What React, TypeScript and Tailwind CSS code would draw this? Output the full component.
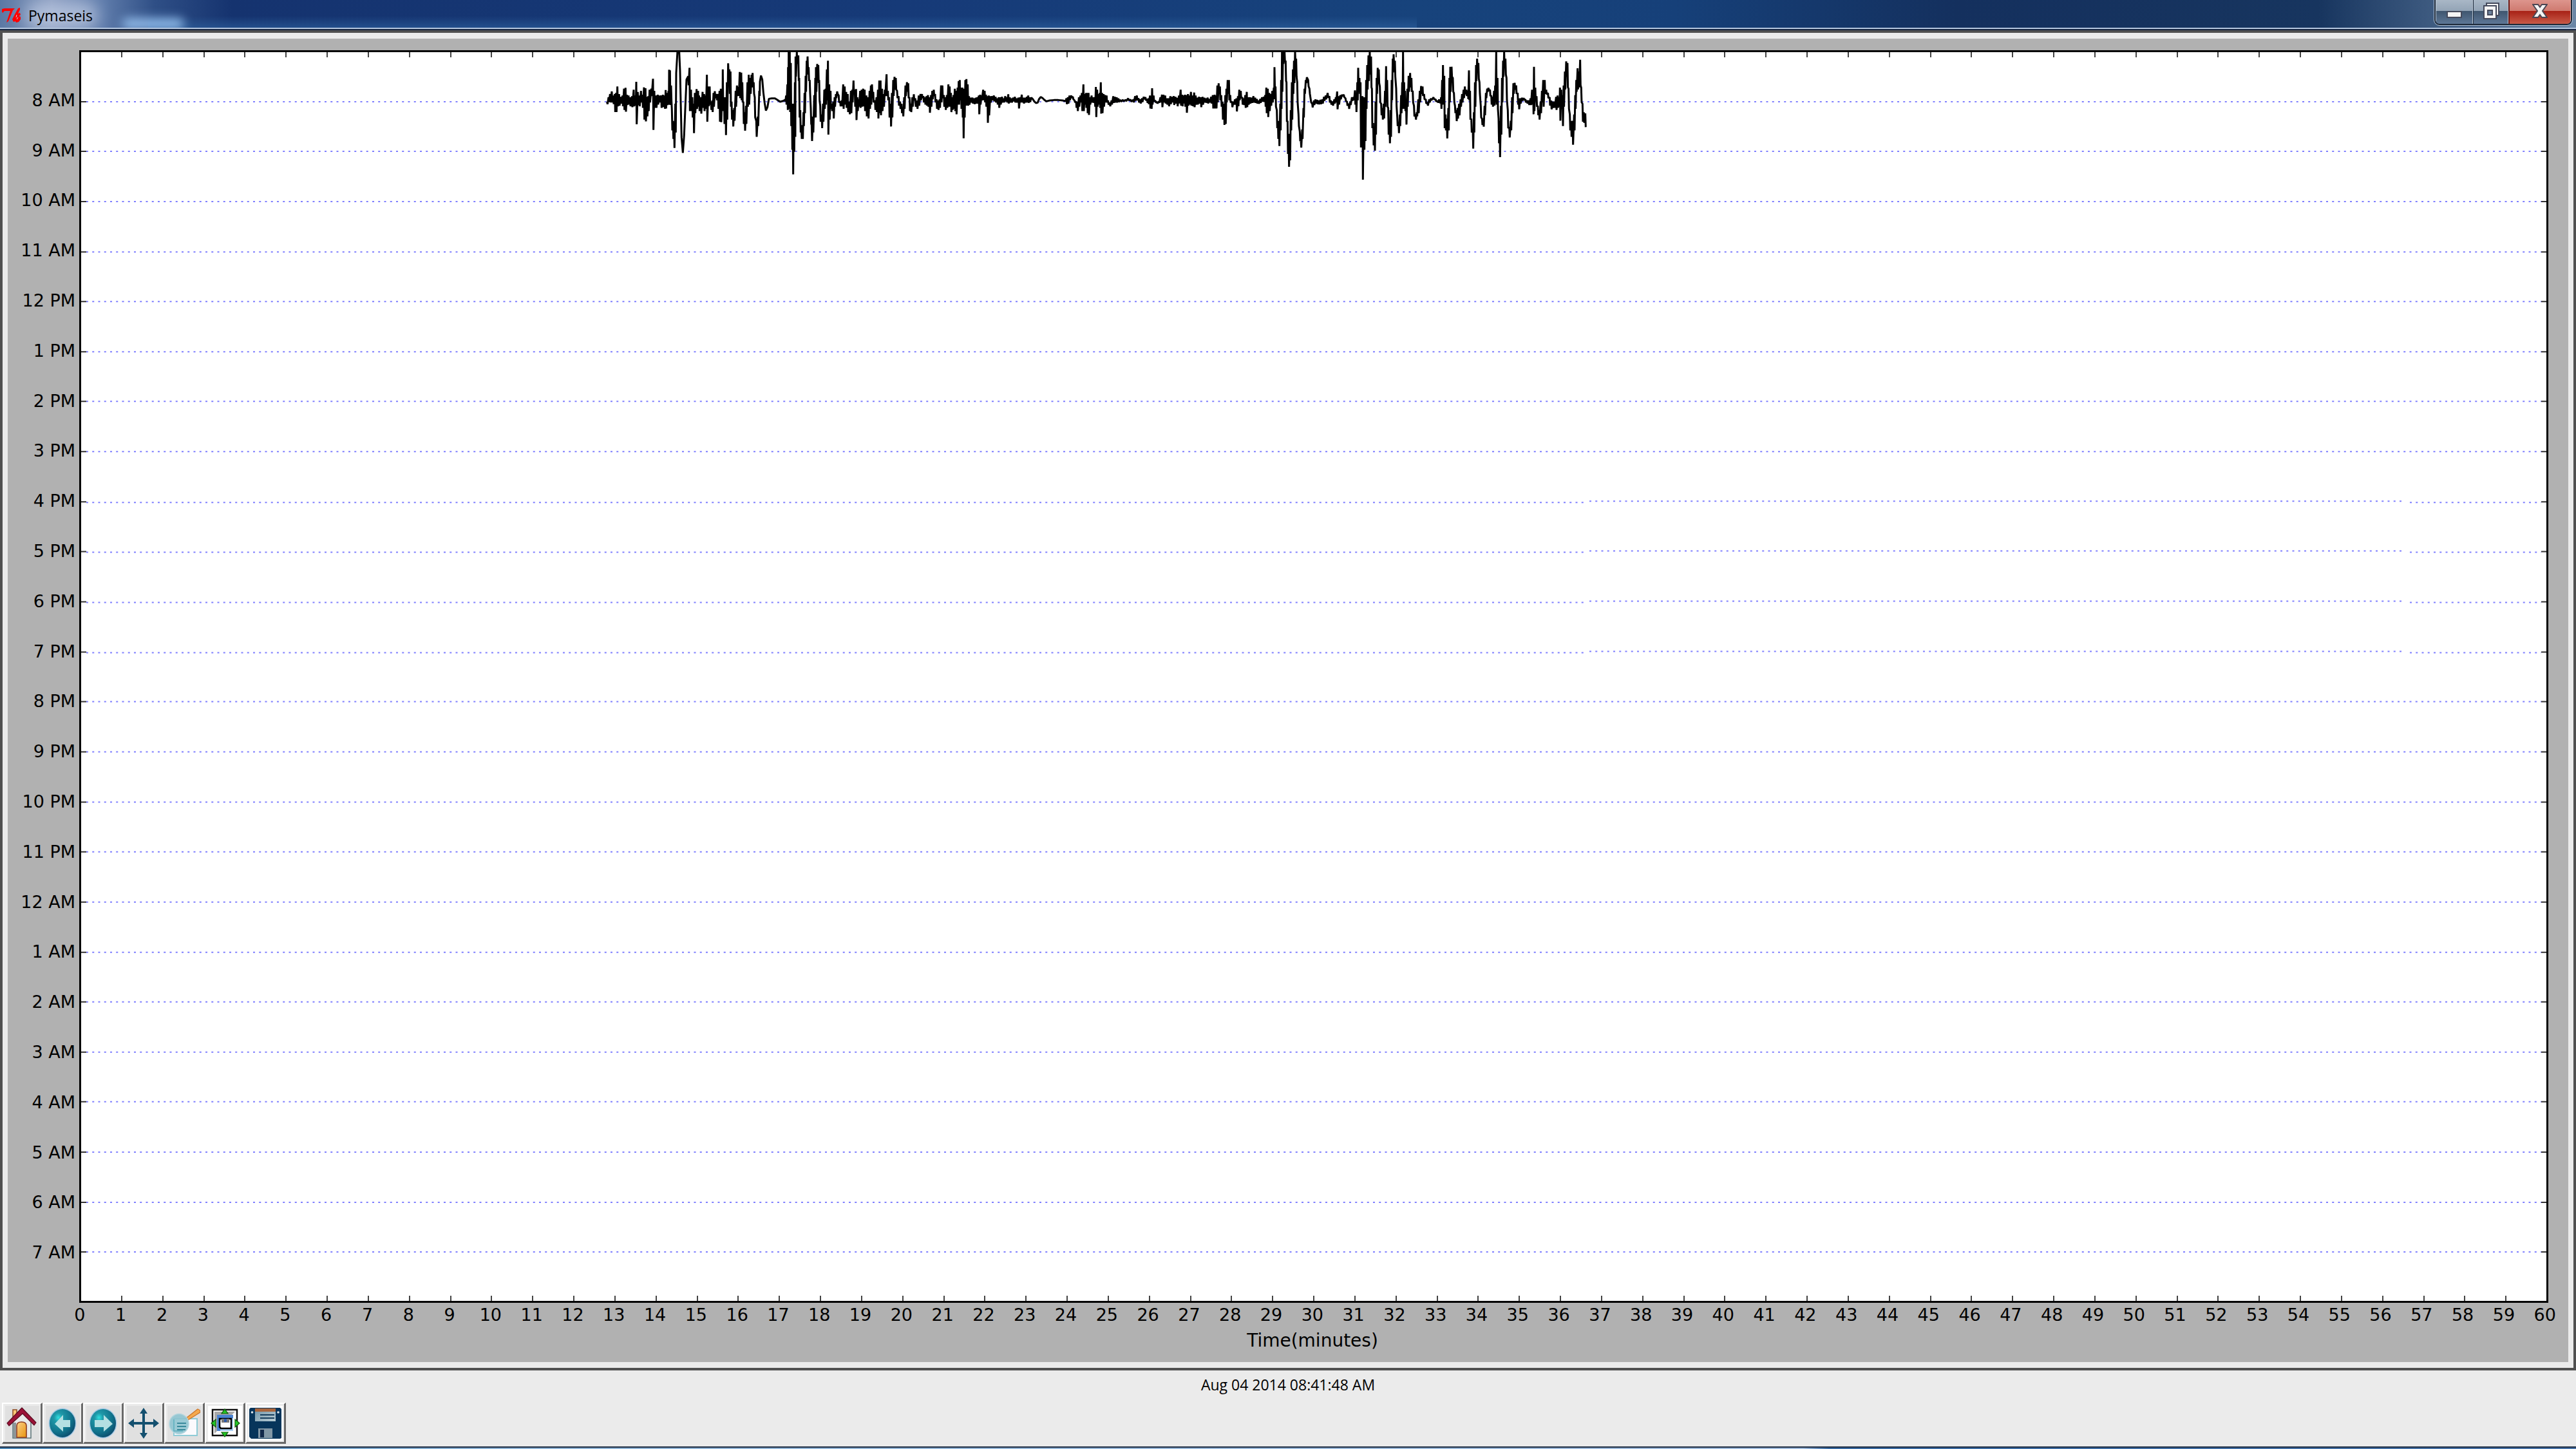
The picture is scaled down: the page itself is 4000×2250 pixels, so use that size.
import React from "react";

const HOURS = [
  "8 AM", "9 AM", "10 AM", "11 AM", "12 PM", "1 PM", "2 PM", "3 PM",
  "4 PM", "5 PM", "6 PM", "7 PM", "8 PM", "9 PM", "10 PM", "11 PM",
  "12 AM", "1 AM", "2 AM", "3 AM", "4 AM", "5 AM", "6 AM", "7 AM",
];
const MINUTES = Array.from({ length: 61 }, (_, i) => i);

const PLOT_W = 3828;
const PLOT_H = 1938;
const minuteX = (m: number) => Math.round((m * 3830) / 60) - 1;
const hourY = (h: number) => Math.round((h * 1941) / 25) - 1;

/*
 * Recorded samples, in thirds of a plot unit. Each sample is "x,y" or, where
 * the signal is denser than the trace is wide, "x,high,low".
 */
const SEGMENTS: { start: number; samples: string }[] = [
  {
    start: 2382,
    samples:
      "68,290,308 75,270,298 82,255,300 90,243,300 97,262,308 104,255,345 110,250,345 116,220,318 124,255,315 132,268,305 140,262,318 147,230,335 154,226,343 160,258,312 168,262,310 175,270,318 184,265,322 192,235,318 200,262,315 204,198,402 211,245,312 218,262,318 226,240,300 233,258,325 240,224,380 247,228,388 254,268,365 260,265,340 266,235,300 274,230,270 282,184,428 288,240,325 296,262,325 304,258,310 312,262,300 320,262,325 328,258,322 336,262,330 341,236,328 348,250,312 354,240,310 357,142,300 361,145,312 366,215,290 370,330,430 375,380,470 380,390,512 386,300,440 390,160 396,58 404,58 408,150 411,290 415,460 421,532 427,450 432,330 438,190 446,172,220 452,133,340 459,235,340 465,270,370 471,300,443 477,250,350 485,232,330 492,240,320 497,262,340 505,270,352 513,245,325 520,255,340 527,262,330 533,165,390 540,220,318 546,220,310 552,290,335 558,285,345 564,250,320 570,242,280 578,255,290 585,255,330 592,240,390 598,230,392 604,255,340 607,140,320 613,270,400 620,270,452 626,200,380 632,112,170 638,140,260 643,150,320 648,290,380 654,330,412 660,320,385 667,240,320 673,215,270 680,222,270 686,152,280 693,155,290 698,200,300 703,290,400 709,340,432 715,310,400 722,200,320 728,165,310 735,180,260 741,165,230 746,157,230 751,200,260 756,270,370 763,380,460 770,360,410 777,240,270 780,200 785,172 791,190 796,250 802,300 808,335 815,320 822,280 835,278 850,278 862,286 874,294 888,290 897,285",
  },
  {
    start: 3222,
    samples:
      "57,285,295 62,262,310 68,210,335 71,130,320 74,58,330 79,58,345 84,110,410 89,300,520 93,380,635 98,300,530 103,200,460 106,80,180 112,58,120 119,75,200 123,180,370 128,330,440 133,400,470 138,400,470 143,340,410 148,250,350 153,170,250 158,100,170 162,80,150 167,130,200 172,190,260 177,320,400 181,400,480 187,360,440 193,260,370 198,180,370 201,130,250 207,115,190 212,120,210 216,190,290 221,310,390 228,350,420 234,300,390 240,235,330 246,230,310 252,140,290 257,100,450 263,210,380 269,240,330 275,300,340 282,290,375 288,270,320 294,255,280 300,243,260 307,262,300 314,290,318 321,285,318 328,210,330 335,220,310 342,245,325 349,255,345 357,290,355 364,240,350 370,235,300 376,192,260 382,235,320 388,232,382 394,270,340 400,280,320 407,240,325 414,235,320 421,230,318 428,235,340 436,262,365 444,270,375 451,240,330 457,215,310 462,210,260 468,245,300 476,285,335 483,270,345 490,235,375 496,192,350 502,192,360 509,230,340 516,255,320 522,235,270 530,163,270 536,240,290 542,270,370 549,300,412 555,250,370 561,190,270 567,175,240 573,180,240 579,240,280 586,265,315 593,290,330 600,300,350 606,320,365 612,270,330 618,215,270 625,200,250 631,205,280 637,270,340 643,300,345 650,270,320 657,256,290 664,275,320 672,285,330 680,262,315 688,255,290 695,255,280 702,265,300 709,270,310 716,265,315 723,260,320 730,270,348 737,260,320 743,240,285 750,235,270 756,255,300 763,280,330 770,285,335 777,280,325 784,215,300 790,215,280 797,260,320 804,270,335 811,260,325 818,210,320 824,220,320 830,250,345 836,270,335 842,260,330 848,230,340 854,240,355 861,225,310 866,195,310 871,190,290 877,225,330 883,225,370 887,240,467 892,230,370 897,190,310 902,185,315 908,210,315 914,265,310 922,272,300 930,272,305 938,275,308 946,272,305 953,270,305 960,262,355 966,258,310 972,262,290 980,235,290 987,240,300 993,258,320 1000,265,395 1006,262,360 1013,265,300 1022,265,290 1030,262,295 1038,268,300 1046,275,310 1053,270,325 1060,270,310 1068,268,300 1076,275,300 1083,265,295 1090,270,300 1097,256,305 1104,270,300 1112,275,300 1120,272,295 1128,268,300 1136,275,300 1145,272,328 1152,270,300 1160,258,300 1168,272,305 1176,272,300 1184,268,300 1190,262,302 1197,270,298",
  },
  {
    start: 4422,
    samples:
      "4,275 10,280 18,292 26,300 34,298 40,282 48,272 56,276 64,284 74,292 90,288 110,286 130,286 150,288 163,288,292 168,275,308 175,270,305 182,262,290 190,262,278 198,268,285 206,285,300 213,290,325 219,290,340 226,270,320 233,262,300 240,250,340 247,210,340 253,255,310 259,250,325 265,250,350 271,250,358 277,270,310 285,262,300 293,270,302 300,270,320 305,222,368 311,235,320 317,255,310 323,250,325 328,200,352 334,250,350 341,255,320 348,260,300 355,262,300 362,285,310 370,295,318 378,285,310 386,265,302 394,268,300 402,270,300 410,275,298 420,282,296 432,282,295 444,282,294 456,275,290 468,282,296 480,282,300 488,265,292 496,262,290 504,275,300 512,280,305 520,275,298 528,268,285 536,270,290 544,280,302 550,275,308 557,262,328 563,270,330 567,228,310 574,262,295 582,285,300 590,292,305 598,290,302 606,270,300 613,258,322 620,258,300 628,262,305 636,275,310 644,275,318 652,265,308 660,268,300 668,265,312 676,268,305 684,272,318 692,262,305 700,235,315 707,258,318 714,262,305 720,258,320 727,260,348 734,255,315 741,262,310 748,245,315 756,262,318 763,248,322 770,262,310 778,272,310 786,268,305 794,270,322 802,268,310 810,272,300 818,275,302 826,272,305 834,278,300 842,268,305 850,260,328 858,258,328 865,262,328 871,215,300 877,205,260 883,220,290 889,260,320 895,290,380 902,300,405 908,260,400 913,230,300 919,190,260 925,190,290 931,260,300 939,290,322 946,290,310 953,280,310 960,275,342 967,265,318 973,235,290 980,240,280 987,270,310 994,275,312 1001,260,325 1008,245,322 1015,270,310 1023,270,305 1031,272,302 1039,265,300 1047,272,302 1055,278,305 1063,285,306 1071,278,302 1079,270,296 1087,268,298 1094,260,320 1099,225,350 1106,230,368 1113,250,340 1120,255,315 1127,240,300 1134,225,285 1137,130,240 1142,220,320",
  },
  {
    start: 5502,
    samples:
      "68,330,420 73,380,470 78,380,503 84,300,430 88,190,330 92,58,250 97,58,120 104,58,110 109,100,200 113,200,390 118,380,540 123,470,600 128,440,570 133,330,430 138,200,380 143,140,260 148,100,210 153,58,120 158,90,180 163,200,300 169,350,410 175,430,480 180,470,510 186,420,470 192,320,370 197,230,260 203,190,210 208,180 214,190,225 220,230,260 226,280,300 233,300,323 241,285,312 248,280,305 256,282,308 264,285,308 272,282,308 280,280,305 288,268,292 296,262,285 305,250,278 313,265,300 320,285,310 328,290,315 336,280,305 343,270,300 349,243,332 356,265,310 364,260,285 372,258,270 380,258,275 388,275,295 395,290,315 403,300,330 410,290,312 418,270,292 426,270,290 432,238,310 437,250,345 443,200,290 447,133,240 453,180,260 458,200,510 463,265,500 467,265,660 474,270,520 479,290,480 484,190,330 489,120,240 495,75,200 501,58,170 507,80,230 511,230,420 517,390,500 523,420,525 528,290,450 533,180,260 538,133,200 543,140,210 548,220,300 554,300,360 560,320,380 566,300,375 572,240,320 577,125,300 582,190,320 587,320,450 593,400,490 598,330,460 603,190,290 608,90,160 612,70,120 618,100,180 624,230,320 629,360,410 635,390,443 641,350,410 647,260,350 652,200,320 656,58,330 661,200,330 665,240,340 670,290,403 676,230,320 682,170,250 689,157,230 695,180,250 701,240,300 707,310,365 714,350,380 720,340,365 727,280,350 734,240,300 740,218,260 747,220,270 754,255,285 762,280,305 770,295,315 778,280,300 786,275,290 798,270,285 808,280,295 818,288,302 824,280,300",
  },
  {
    start: 6222,
    samples:
      "108,280,305 113,270,330 118,190,310 122,120,250 128,170,420 134,350,430 140,370,468 147,320,430 152,180,300 156,128,250 162,128,180 168,180,250 173,250,300 178,310,350 184,330,387 190,320,375 197,300,360 204,280,320 211,255,300 218,235,280 224,220,262 231,235,270 238,240,285 243,145,290 248,240,380 254,370,440 261,420,515 266,340,440 271,200,320 276,120,200 281,90,140 287,110,190 292,200,260 298,310,370 304,370,405 310,370,413 316,310,360 322,250,280 328,230,250 334,226,245 341,235,270 347,262,310 353,268,320 360,240,315 365,215,300 370,58,310 376,180,330 381,370,490 386,380,555 392,310,450 397,180,300 402,100,180 407,58,140 413,90,170 418,180,290 424,330,420 431,410,463 438,380,430 444,270,350 450,205,260 456,203,240 463,215,260 470,250,310 475,275,332 482,275,305 490,272,292 498,273,288 506,280,300 514,285,305 522,285,312 530,275,312 537,235,310 542,240,355 546,128,340 552,225,290 558,265,320 564,310,360 570,330,380 577,290,350 583,240,300 589,190,320 596,190,260 603,235,262 611,250,280 619,270,315 626,285,332 633,290,325 641,290,325 649,268,335 656,262,325 663,270,320 667,225,385 673,235,330 679,260,410 684,215,320 690,150,240 696,103,180 702,110,230 707,230,330 713,350,430 719,380,460 726,380,497 733,350,430 738,260,330 743,190,250 749,135,240 755,150,230 761,95,220 766,225,300 772,300,390 778,340,395 785,345,415",
  },
];

const tracePoints = SEGMENTS.flatMap(({ start, samples }) =>
  samples.split(" ").map((s) => {
    const [x, high, low] = s.split(",").map(Number);
    const px = start + x;
    const at = (y: number, dx = 0) => `${px + dx},${y - 63}`;
    return low === undefined ? at(high) : `${at(high + 3)} ${at(low - 3, 2)}`;
  }),
).join(" ");

function Seismogram() {
  return (
    <svg
      className="absolute inset-0 block h-full w-full"
      viewBox={`0 0 ${PLOT_W} ${PLOT_H}`}
      preserveAspectRatio="none"
      role="img"
      aria-label="Seismogram"
    >
      {HOURS.map((h, i) => {
        const y = hourY(i + 1);
        const shifted = i >= 8 && i <= 11;
        return (
          <g key={h}>
            {shifted ? (
              <path
                d={`M8 ${y + 1}H2334M2342 ${y - 1}H3608M3616 ${y + 1}H3820`}
                stroke="#8080ff"
                strokeWidth="2"
                strokeDasharray="3 6.25"
              />
            ) : (
              <path d={`M8 ${y}H3820`} stroke="#8080ff" strokeWidth="2" strokeDasharray="3 6.25" />
            )}
            <path d={`M0 ${y}H8M${PLOT_W - 8} ${y}H${PLOT_W}`} stroke="#333" strokeWidth="2" />
          </g>
        );
      })}
      {MINUTES.slice(1, 60).map((m) => (
        <path
          key={m}
          d={`M${minuteX(m)} 0V8M${minuteX(m)} ${PLOT_H - 8}V${PLOT_H}`}
          stroke="#444"
          strokeWidth="2"
        />
      ))}
      <g transform="scale(0.33333)">
        <polyline points={tracePoints} fill="none" stroke="#000" strokeWidth="9" strokeLinejoin="bevel" />
      </g>
    </svg>
  );
}

function TkIcon() {
  return (
    <svg viewBox="0 0 30 24" className="h-6 w-[30px]" aria-hidden="true">
      <path d="M1 6V2l4-1h16l-3 3-7 17-3 2 6-18H5L2 8z" fill="#f00" />
      <path d="M29 0l-3 1-6 11-3 6 2 4 3-1 1 2 4-1 3-4v-4l-3-1 3-2-1-3-3 1 3-6z" fill="#f00" />
      <path d="M24 11l-1 4M26 15l-2 3" stroke="#c9d2e6" strokeWidth="1" />
    </svg>
  );
}

function HomeIcon() {
  return (
    <svg viewBox="0 0 50 50" className="h-[50px] w-[50px]" aria-hidden="true">
      <defs>
        <linearGradient id="door" x1="0" y1="0" x2="1" y2="1">
          <stop offset="0" stopColor="#fbd08a" />
          <stop offset="1" stopColor="#e8940c" />
        </linearGradient>
      </defs>
      <path d="M11 4h6v14h-6z" fill="#fbc877" stroke="#8c4b25" strokeWidth="1.5" />
      <path d="M11 24 25 10l14 14v24H11z" fill="#e9eaea" />
      <path d="M11 22v26h28V22" fill="none" stroke="#5c7478" strokeWidth="1.5" />
      <path d="M12 24v23h4V24z" fill="#8d9698" />
      <path d="M17 47V29q0-6 7.500-6t7.500 6v18z" fill="url(#door)" stroke="#8c3b22" strokeWidth="1.600" />
      <path d="M25 1 2 25l3 4 21-19 18 18 3-4z" fill="#9c1237" stroke="#5c0c22" strokeWidth="1.200" strokeLinejoin="round" />
    </svg>
  );
}

function ArrowIcon({ right = false }: { right?: boolean }) {
  const id = right ? "orb-next" : "orb-prev";
  return (
    <svg viewBox="0 0 50 50" className="h-[50px] w-[50px]" aria-hidden="true">
      <defs>
        <radialGradient id={id} cx="0.34" cy="0.3" r="0.75">
          <stop offset="0" stopColor="#2fe0e0" />
          <stop offset="0.220" stopColor="#1f98a8" />
          <stop offset="0.700" stopColor="#11718a" />
          <stop offset="1" stopColor="#0c4d6e" />
        </radialGradient>
      </defs>
      <ellipse cx="25" cy="25" rx="21.500" ry="23.500" fill="#a9cbe6" />
      <ellipse cx="25" cy="25" rx="20" ry="22" fill={`url(#${id})`} />
      {right ? (
        <path d="M12 20h14v-8l14 14-14 12v-7H12z" fill="#b4dfe2" />
      ) : (
        <path d="M37 20H26v-8L13 26l13 12v-7h11z" fill="#b4dfe2" />
      )}
    </svg>
  );
}

function PanIcon() {
  return (
    <svg viewBox="0 0 50 50" className="h-[50px] w-[50px]" aria-hidden="true">
      <path
        d="M25 1l6 9h-4v13h13v-5l9 7-9 7v-5H27v13h4l-6 9-6-9h4V27H10v5l-9-7 9-7v5h13V10h-4z"
        fill="#14506f"
      />
    </svg>
  );
}

function ZoomIcon() {
  return (
    <svg viewBox="0 0 50 50" className="h-[50px] w-[50px]" aria-hidden="true">
      <path d="M9 18h36v26H9z" fill="#fbfafd" stroke="#8fcbd6" strokeWidth="2" />
      <path d="M28 17 46 3q4 1 4 5L31 20z" fill="#f5a94c" stroke="#c9752a" strokeWidth="1.200" />
      <ellipse cx="17" cy="26" rx="15" ry="15.500" fill="#8cc3cf" fillOpacity="0.880" stroke="#b2d5de" strokeWidth="1.500" />
      <path d="M9 19v18h14" fill="none" stroke="#5fb0bf" strokeWidth="1.500" />
      <path d="M14 25h14M14 30h14M14 35h13" stroke="#3a8a9c" strokeWidth="2" />
    </svg>
  );
}

function SubplotsIcon() {
  return (
    <svg viewBox="0 0 50 50" className="h-[50px] w-[50px]" aria-hidden="true">
      <path d="M6 4h38v40H6z" fill="#fff" stroke="#111" strokeWidth="2.500" />
      <path d="M9 7h32l-5 5H14v24l-5 5z" fill="#a8a8a8" />
      <path d="M13 12h25v25H13z" fill="#a9cff5" />
      <path d="M13 12h25v5H18v20h-5z" fill="#4a83d2" />
      <path d="M17 18h18v15H19l-2-2z" fill="#fff" stroke="#000" strokeWidth="2.500" />
      <path d="M20 18h12v6H20z" fill="#777" />
      <path d="M24 18h4v5h-4z" fill="#2d5bab" />
      <path d="M25 3l5 7H20zM25 46l5-7H20zM4 25l7-6v12zM48 25l-7-6v12z" fill="#25c425" stroke="#0c5c0c" strokeWidth="1.200" />
    </svg>
  );
}

function SaveIcon() {
  return (
    <svg viewBox="0 0 50 50" className="h-[50px] w-[50px]" aria-hidden="true">
      <defs>
        <linearGradient id="label" x1="0" y1="0" x2="1" y2="1">
          <stop offset="0" stopColor="#6f93a6" />
          <stop offset="1" stopColor="#b9cdd5" />
        </linearGradient>
      </defs>
      <path d="M2 1h46l2 2v45l-2 1H3l-3-3V3z" fill="#07355b" />
      <path d="M9 2h32v20H9z" fill="url(#label)" />
      <path d="M9 2h32v5H9z" fill="#a8653c" />
      <path d="M17 12h22M17 17h22" stroke="#173f5e" strokeWidth="1.800" />
      <path d="M14 33h22v15H14z" fill="#8197a6" />
      <path d="M17 35h6v12h-6z" fill="#12294a" />
      <circle cx="4.500" cy="8" r="1.800" fill="#dfe8ee" />
      <circle cx="45" cy="8" r="1.800" fill="#dfe8ee" />
    </svg>
  );
}

function ToolButton({ label, plain, children }: { label: string; plain?: boolean; children: React.ReactNode }) {
  return (
    <button
      type="button"
      aria-label={label}
      title={label}
      className="flex h-16 w-[63px] items-center justify-center border-t-2 border-r-[3px] border-b-[3px] border-l-2 border-t-white border-r-[#696969] border-b-[#696969] border-l-white bg-[#ebebeb]"
    >
      <span
        className={
          plain
            ? "flex h-[54px] w-[53px] items-center justify-center bg-white"
            : "flex h-[54px] w-[53px] items-center justify-center bg-[#e0e0e0]"
        }
      >
        {children}
      </span>
    </button>
  );
}

function TitleBar() {
  return (
    <header className="relative flex h-[47px] shrink-0 items-start justify-between overflow-hidden border-b-2 border-[#142440] bg-[linear-gradient(90deg,#5b78a4_0%,#8a9cbf_2%,#5f7cab_4%,#2f4f86_6%,#15336f_9%,#163a78_35%,#17437c_55%,#164079_65%,#14305e_76%,#17355f_90%,#3a577d_94%,#6b86a5_100%)]">
      <div className="absolute bottom-0 left-[230px] h-5 w-[1970px] bg-linear-to-t from-[#2c5f9c] to-transparent opacity-70" />
      <div className="absolute bottom-0 left-[190px] h-4 w-24 rounded-full bg-[#98c3f0] blur-sm" />
      <div className="absolute top-1 left-10 h-10 w-28 rounded-full bg-[#c3cfe6] opacity-70 blur-md" />
      <div className="absolute bottom-0 left-0 h-[2px] w-full bg-[#b4c6de]" />
      <div className="relative flex items-center gap-3 pt-2 pl-[2px]">
        <TkIcon />
        <h1 className="text-[23px] leading-8 text-black">Pymaseis</h1>
      </div>
      <div className="relative mr-[6px] flex h-[39px] overflow-hidden rounded-b-lg border-2 border-t-0 border-[#1c2838] outline-1 outline-[#a9bace]">
        <button
          type="button"
          aria-label="Minimize"
          className="flex w-[58px] items-center justify-center border-r border-l border-[#b6c4d3] bg-[linear-gradient(#a9b7c6_0%,#93a4b6_45%,#3f566f_46%,#5d7796_100%)] pt-2"
        >
          <svg viewBox="0 0 24 11" className="h-[11px] w-6" aria-hidden="true">
            <path d="M1 1h22v9H1z" fill="#f4f4f4" stroke="#454a5c" strokeWidth="2" />
          </svg>
        </button>
        <button
          type="button"
          aria-label="Restore"
          className="flex w-[55px] items-center justify-center border-r border-l border-[#b6c4d3] border-l-[#1c2838] bg-[linear-gradient(#a9b7c6_0%,#93a4b6_45%,#3f566f_46%,#5d7796_100%)] pb-1"
        >
          <svg viewBox="0 0 26 26" className="h-[26px] w-[26px]" aria-hidden="true">
            <path d="M6 1h19v19H6z" fill="#f4f4f4" stroke="#454a5c" strokeWidth="2" />
            <path d="M2 5h19v20H2z" fill="#f4f4f4" stroke="#454a5c" strokeWidth="2" />
            <path d="M8 12h7v7H8z" fill="#6c829b" stroke="#454a5c" strokeWidth="2" />
          </svg>
        </button>
        <button
          type="button"
          aria-label="Close"
          className="flex w-[97px] items-center justify-center border-r border-l-2 border-[#e0a39a] border-l-[#6a1a16] bg-[linear-gradient(#dd958d_0%,#cf7a70_45%,#a82116_46%,#c85a48_100%)] pb-1"
        >
          <svg viewBox="0 0 24 22" className="h-[22px] w-6" aria-hidden="true">
            <path
              d="M1 1h8l3 4 3-4h8l-7 10 7 10h-8l-3-4-3 4H1l7-10z"
              fill="#f4f4f4"
              stroke="#4c4653"
              strokeWidth="2"
            />
          </svg>
        </button>
      </div>
    </header>
  );
}

export default function App() {
  return (
    <div className="flex h-screen flex-col overflow-hidden bg-[#ebebeb] font-['Open_Sans',sans-serif] text-black">
      <TitleBar />
      <main className="flex min-h-0 flex-1 flex-col border-4 border-[#505050] bg-[#ebebeb] p-[9px] pr-2 pl-2">
        <figure className="flex min-h-0 flex-1 flex-col bg-[#b1b1b1] pt-[18px] font-['DejaVu_Sans',sans-serif] text-[27px] leading-8">
          <div className="flex min-h-0 flex-1 pr-[31px]">
            <div className="flex w-[111px] flex-col pr-[6px] text-right whitespace-nowrap">
              <div className="grow-1 basis-0" />
              {HOURS.map((h) => (
                <div key={h} className="flex min-h-0 grow-2 basis-0 items-center justify-end">
                  {h}
                </div>
              ))}
              <div className="grow-1 basis-0" />
            </div>
            <div className="relative flex-1 border-3 border-black bg-white">
              <Seismogram />
            </div>
          </div>
          <div className="flex pt-[3px] pr-1 pl-20">
            {MINUTES.map((m) => (
              <div key={m} className="flex min-w-0 flex-1 justify-center">
                {m}
              </div>
            ))}
          </div>
          <figcaption className="pt-2 pr-1 pb-[17px] pl-20 text-center text-[28px]">Time(minutes)</figcaption>
        </figure>
      </main>
      <footer className="shrink-0">
        <p className="pt-[6px] text-center text-[23px] leading-8">Aug 04 2014 08:41:48 AM</p>
        <div role="toolbar" aria-label="Plot tools" className="flex pt-3 pb-1 pl-[3px]">
          <ToolButton label="Home"><HomeIcon /></ToolButton>
          <ToolButton label="Back"><ArrowIcon /></ToolButton>
          <ToolButton label="Forward"><ArrowIcon right /></ToolButton>
          <ToolButton label="Pan"><PanIcon /></ToolButton>
          <ToolButton label="Zoom"><ZoomIcon /></ToolButton>
          <ToolButton label="Configure subplots" plain><SubplotsIcon /></ToolButton>
          <ToolButton label="Save" plain><SaveIcon /></ToolButton>
        </div>
        <div className="h-1 border-t-2 border-[#1d2c42] bg-[linear-gradient(90deg,#4f8ab8_0%,#8fb4d6_20%,#9fbadb_70%,#3a6ca5_71%,#4a74a8_100%)]" />
      </footer>
    </div>
  );
}
